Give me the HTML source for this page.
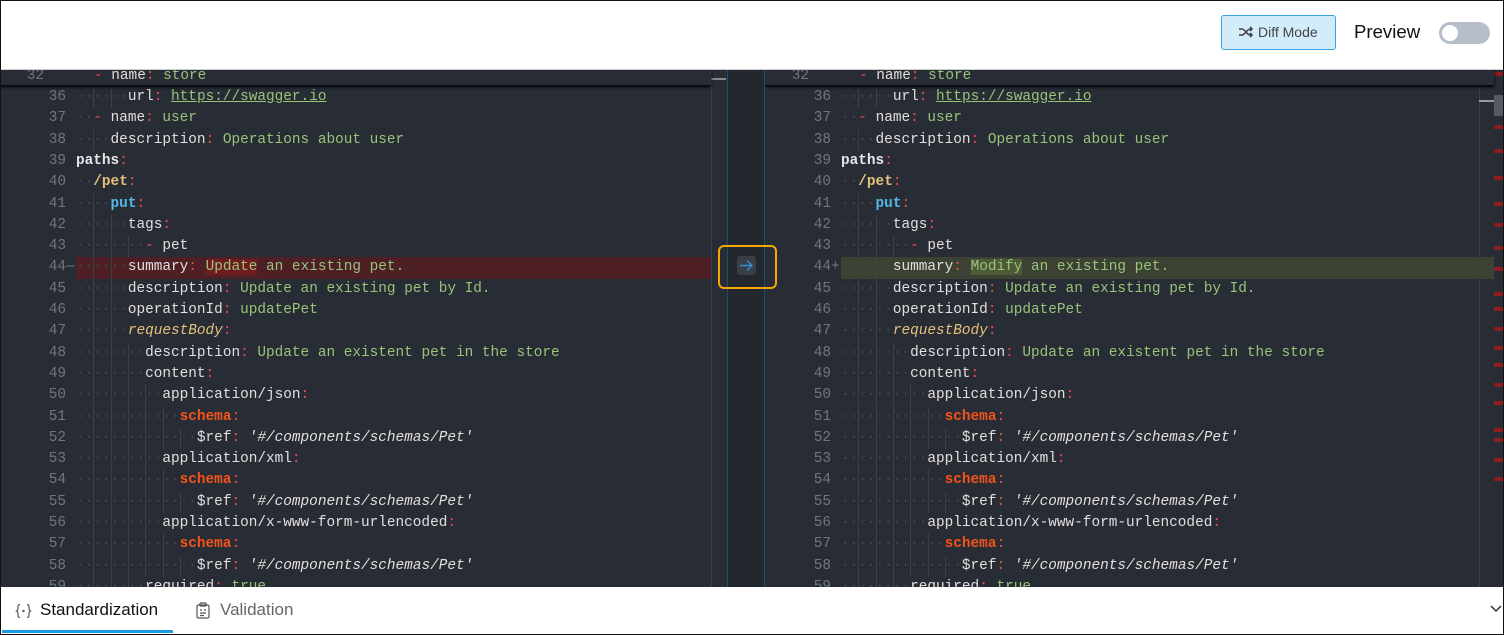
<!DOCTYPE html>
<html><head><meta charset="utf-8"><style>
*{margin:0;padding:0;box-sizing:border-box}
body{width:1504px;height:635px;overflow:hidden;background:#fff;font-family:"Liberation Sans",sans-serif;position:relative}
.frame{position:absolute;left:0;top:0;width:1504px;height:635px;border:1px solid #111;pointer-events:none;z-index:50}
.top{position:absolute;left:0;top:0;width:1504px;height:70px;background:#fff;border-bottom:1px solid #ccc}
.btn{position:absolute;left:1221px;top:15px;width:115px;height:35px;background:#d3ecfb;border:1px solid #3aa3e3;border-radius:3px;font-size:14px;color:#444;line-height:33px;padding-left:36px}
.btn svg{position:absolute;left:17px;top:10px}
.prev{position:absolute;left:1354px;top:21px;font-size:18.6px;color:#111}
.tog{position:absolute;left:1439px;top:22px;width:51px;height:22px;background:#b8bec9;border-radius:11px}
.tog i{position:absolute;left:3px;top:3px;width:16px;height:16px;background:#fff;border-radius:50%}
.ed{position:absolute;top:70px;height:517px;background:#282c34;overflow:hidden}
.code{font-family:"Liberation Mono",monospace;font-size:14.4px;line-height:21.3px;white-space:pre;color:#d7dae0}
.ln{position:absolute;width:66px;text-align:right;color:#6f7682}
.row{position:absolute;height:21.3px}
.d{color:#41464f}
.k{color:#e3dede}.c{color:#ef4b4b}.s{color:#98c379}.b{font-weight:bold}
.p{color:#e5e5e5;font-weight:bold}.y{color:#e5c07b;font-weight:bold}.bl{color:#56b6e8;font-weight:bold}
.sc{color:#f2541b;font-weight:bold}.it{font-style:italic}.iy{font-style:italic;color:#e5c07b}
.bottom{position:absolute;left:0;top:587px;width:1504px;height:48px;background:#fff}
</style></head><body>
<div class="top">
<div class="btn"><svg width="14" height="12" viewBox="0 0 14 12" fill="none" stroke="#444" stroke-width="1.6"><path d="M0 3h3c3 0 5 6 8 6h2M0 9h3c3 0 5-6 8-6h2M11 1l2 2-2 2M11 7l2 2-2 2"/></svg>Diff Mode</div>
<div class="prev">Preview</div>
<div class="tog"><i></i></div>
</div>

<div class="ed code" style="left:0;width:727px">
<div style="position:absolute;left:711px;top:0;width:1px;height:517px;background:#3a3f48"></div>
<div style="position:absolute;left:711px;top:8px;width:15px;height:2px;background:#888"></div>
<div id="L"></div>
</div>
<div style="position:absolute;left:727px;top:70px;width:38px;height:517px;background:#23272e;border-left:1px solid #1d4e6e;border-right:1px solid #1d4e6e"></div>

<div class="ed code" style="left:765px;width:739px">
<div style="position:absolute;left:714px;top:0;width:1px;height:517px;background:#3a3f48"></div>
<div style="position:absolute;left:714px;top:30px;width:15px;height:2px;background:#999"></div>
<div style="position:absolute;left:729px;top:25px;width:10px;height:21px;background:#555a62"></div>
<div id="R"></div>
<div id="M"></div>
</div>

<div style="position:absolute;left:718px;top:245px;width:59px;height:44px;border:2px solid #f5a800;border-radius:6px;z-index:10"></div>
<div style="position:absolute;left:737px;top:256px;width:19px;height:19px;background:#3a3e46;border-radius:3px;z-index:10"></div>
<svg style="position:absolute;left:739px;top:259px;z-index:11" width="15" height="13" viewBox="0 0 15 13" fill="none" stroke="#2d8fd6" stroke-width="1.4"><path d="M1 6.5h12M8 1.5l5 5-5 5"/></svg>

<div class="bottom">
<svg style="position:absolute;left:15px;top:16px" width="17" height="16" viewBox="0 0 17 16" fill="none" stroke="#555" stroke-width="1.2"><path d="M5 1.5C3 1.5 3 3 3 5s-1.5 3-1.5 3S3 8.5 3 11s0 3.5 2 3.5M12 1.5c2 0 2 1.5 2 3.5s1.5 3 1.5 3S14 8.5 14 11s0 3.5-2 3.5"/><circle cx="8.5" cy="8" r=".6" fill="#555"/></svg>
<div style="position:absolute;left:40px;top:13px;font-size:17px;color:#111">Standardization</div>
<div style="position:absolute;left:2px;top:43px;width:171px;height:3px;background:#1a9be6"></div>
<svg style="position:absolute;left:196px;top:15px" width="14" height="17" viewBox="0 0 14 17" fill="none" stroke="#555" stroke-width="1.2"><rect x="1" y="3" width="12" height="13" rx="1.5"/><rect x="4" y="1" width="6" height="3" rx=".8"/><path d="M4 8h2M8 8h2M4 11h6M4 13.5h4"/></svg>
<div style="position:absolute;left:220px;top:13px;font-size:17px;color:#666">Validation</div>
<svg style="position:absolute;left:1490px;top:18px" width="12" height="8" viewBox="0 0 12 8" fill="none" stroke="#333" stroke-width="1.5"><path d="M1 1l5 5 5-5"/></svg>
</div>
<div class="frame"></div>

<script>
const lines=[
[36,6,'<span class="k">url</span><span class="c">:</span> <span class="s" style="text-decoration:underline">https://swagger.io</span>'],
[37,2,'<span class="c">-</span> <span class="k">name</span><span class="c">:</span> <span class="s">user</span>'],
[38,4,'<span class="k">description</span><span class="c">:</span> <span class="s">Operations about user</span>'],
[39,0,'<span class="p">paths</span><span class="c">:</span>'],
[40,2,'<span class="y">/pet</span><span class="c">:</span>'],
[41,4,'<span class="bl">put</span><span class="c">:</span>'],
[42,6,'<span class="k">tags</span><span class="c">:</span>'],
[43,8,'<span class="c">-</span> <span class="k">pet</span>'],
[44,6,'SUM'],
[45,6,'<span class="k">description</span><span class="c">:</span> <span class="s">Update an existing pet by Id.</span>'],
[46,6,'<span class="k">operationId</span><span class="c">:</span> <span class="s">updatePet</span>'],
[47,6,'<span class="iy">requestBody</span><span class="c">:</span>'],
[48,8,'<span class="k">description</span><span class="c">:</span> <span class="s">Update an existent pet in the store</span>'],
[49,8,'<span class="k">content</span><span class="c">:</span>'],
[50,10,'<span class="k">application/json</span><span class="c">:</span>'],
[51,12,'<span class="sc">schema</span><span class="c">:</span>'],
[52,14,'<span class="k">$ref</span><span class="c">:</span> <span class="it k">\'#/components/schemas/Pet\'</span>'],
[53,10,'<span class="k">application/xml</span><span class="c">:</span>'],
[54,12,'<span class="sc">schema</span><span class="c">:</span>'],
[55,14,'<span class="k">$ref</span><span class="c">:</span> <span class="it k">\'#/components/schemas/Pet\'</span>'],
[56,10,'<span class="k">application/x-www-form-urlencoded</span><span class="c">:</span>'],
[57,12,'<span class="sc">schema</span><span class="c">:</span>'],
[58,14,'<span class="k">$ref</span><span class="c">:</span> <span class="it k">\'#/components/schemas/Pet\'</span>'],
[59,8,'<span class="k">required</span><span class="c">:</span> <span class="s">true</span>']];
function build(id,right,w){
 let h='';
 h+='<div class="row" style="top:-4px;left:0;width:'+(w)+'px;background:#282c34;z-index:3;box-shadow:0 2px 3px #000;height:19px;overflow:hidden"><span class="ln" style="left:-22px;top:0">32</span><span style="position:absolute;left:94px;top:0"><span class="c">-</span> <span class="k">name</span><span class="c">:</span> <span class="s">store</span></span></div>';
 lines.forEach(([n,ind,t])=>{
  const top=17+(n-36)*21.3;
  let bg='';
  if(n==44) bg=right?'background:#3c4233;':'background:#4e1f25;';
  if(t=='SUM') t=right?'<span class="k">summary</span><span class="c">:</span> <span class="s" style="background:#4d5a35">Modify</span><span class="s"> an existing pet.</span>':'<span class="k">summary</span><span class="c">:</span> <span class="s" style="background:#6e1c20">Update</span><span class="s"> an existing pet.</span>';
  h+='<span class="ln" style="top:'+top+'px;left:0">'+n+(n==44?'<span style="position:absolute;left:66px">'+(right?'+':'\u2014')+'</span>':'')+'</span>';
  if(bg)h+='<div class="row" style="top:'+top+'px;left:76px;width:'+(w-76)+'px;'+bg+'"></div>';
  let dots='';for(let i=0;i<ind;i++)dots+='\u00b7';
  h+='<div class="row" style="top:'+top+'px;left:76px"><span class="d">'+dots+'</span>'+t+'</div>';
  for(let g=2;g<ind;g+=2) h+='<div style="position:absolute;left:'+(76+g*8.65)+'px;top:'+top+'px;width:1px;height:21.3px;background:#3b404a"></div>';
 });
 document.getElementById(id).innerHTML=h;
}
build('L',false,711);
build('R',true,729);
let m='';[72,125,149,176,202,223,246,267,292,307,327,346,363,383,401,428,438,458,477].forEach(y=>{m+='<div style="position:absolute;left:729px;top:'+(y-70)+'px;width:10px;height:4px;background:#8b1d22"></div>'});
document.getElementById('M').innerHTML=m;
</script>
</body></html>
